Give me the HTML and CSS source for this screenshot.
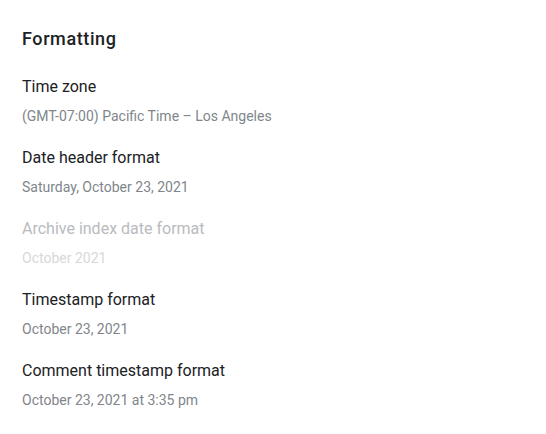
FILE: index.html
```html
<!DOCTYPE html>
<html>
	<head>
		<meta charset="UTF-8">
		<title>Formatting</title>
		<link rel="stylesheet" href="styles.css">
	</head>
	<body>
		<div class="section">
			<h2 class="title">Formatting</h2>
			<ul class="list">
				<li class="item">
					<div class="label">Time zone</div>
					<div class="value">(GMT-07:00) Pacific Time – Los Angeles</div>
				</li>
				<li class="item">
					<div class="label">Date header format</div>
					<div class="value">Saturday, October 23, 2021</div>
				</li>
				<li class="item disabled">
					<div class="label">Archive index date format</div>
					<div class="value">October 2021</div>
				</li>
				<li class="item">
					<div class="label">Timestamp format</div>
					<div class="value">October 23, 2021</div>
				</li>
				<li class="item">
					<div class="label">Comment timestamp format</div>
					<div class="value">October 23, 2021 at 3:35 pm</div>
				</li>
			</ul>
		</div>
	</body>
</html>
```

FILE: styles.css
```css
* {
	margin: 0;
	padding: 0;
	list-style: none;
}

body {
	background: #fff;
	font-family: Roboto, "Noto Sans", Arial, sans-serif;
}

.section {
	padding: 27px 22px 0;
}

.title {
	font-size: 18px;
	line-height: 24px;
	font-weight: 500;
	letter-spacing: 0.6px;
	color: #202124;
	margin-bottom: 24px;
}

.list {
	display: flex;
	flex-direction: column;
	gap: 20px;
}

.item {
	display: flex;
	flex-direction: column;
	gap: 7px;
}

.label {
	font-size: 16px;
	line-height: 24px;
	color: #202124;
}

.value {
	font-size: 14px;
	line-height: 20px;
	color: #80868b;
}

.item.disabled .label {
	color: #b9bbbe;
}

.item.disabled .value {
	color: #d6d8da;
}
```
